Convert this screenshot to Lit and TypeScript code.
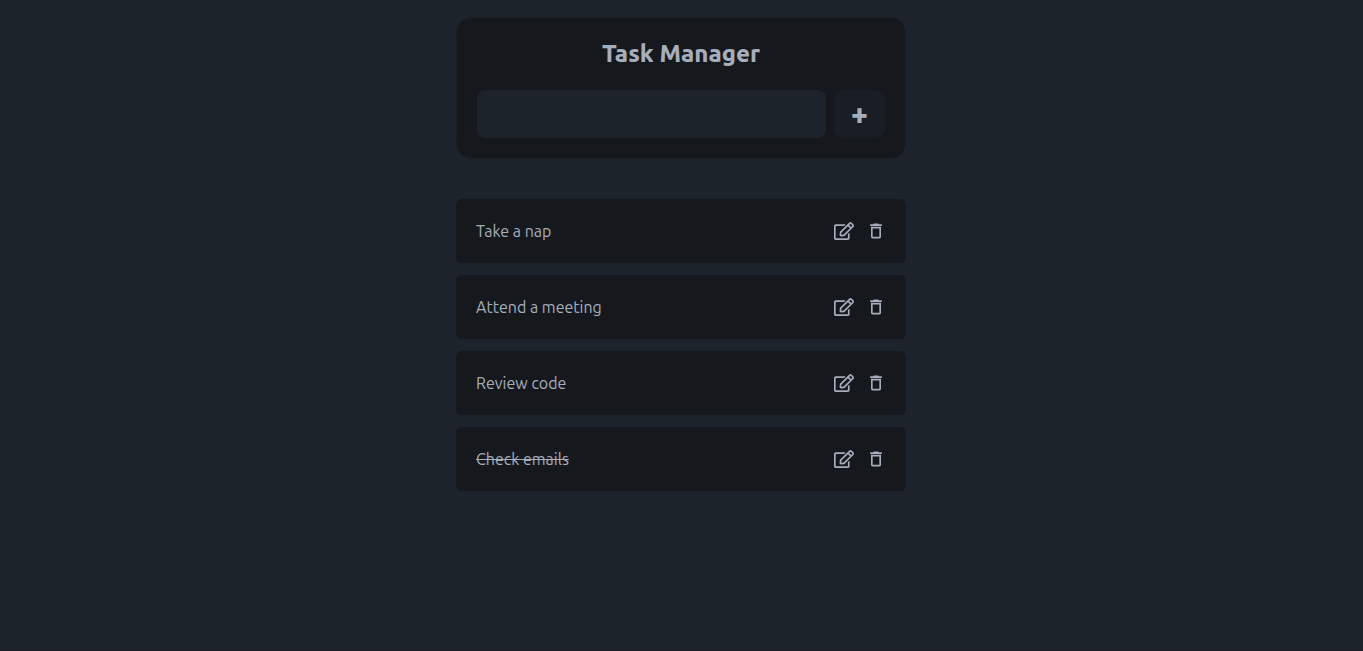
import { LitElement, html, css } from "lit";
import { customElement, property, state } from "lit/decorators.js";
import { classMap } from "lit/directives/class-map.js";

interface Task {
  id: number;
  title: string;
  done: boolean;
}

@customElement("task-item")
class TaskItem extends LitElement {
  @property({ attribute: false }) task!: Task;

  static styles = css`
    :host {
      display: flex;
      align-items: center;
      gap: 12px;
      box-sizing: border-box;
      min-height: 64px;
      padding: 12px 20px;
      border-radius: 6px;
      background: #15191e;
    }
    .title {
      flex: 1;
      min-width: 0;
      cursor: pointer;
      overflow-wrap: anywhere;
    }
    .done {
      text-decoration: line-through;
    }
    button {
      display: block;
      padding: 0;
      border: 0;
      background: none;
      color: inherit;
      cursor: pointer;
    }
    svg {
      display: block;
      width: 20px;
      height: 20px;
      fill: currentColor;
    }
  `;

  private send(name: string) {
    this.dispatchEvent(new CustomEvent(name, { detail: this.task.id }));
  }

  render() {
    return html`
      <span
        class=${classMap({ title: true, done: this.task.done })}
        @click=${() => this.send("toggle")}
        >${this.task.title}</span
      >
      <button type="button" aria-label="Edit task" @click=${() => this.send("edit")}>
        <svg viewBox="0 0 576 512" aria-hidden="true">
          <path
            d="M402.3 344.9l32-32c5-5 13.7-1.5 13.7 5.7V464c0 26.5-21.5 48-48 48H48c-26.5 0-48-21.5-48-48V112c0-26.5 21.5-48 48-48h273.5c7.1 0 10.7 8.6 5.7 13.7l-32 32c-1.5 1.5-3.5 2.3-5.7 2.3H48v352h352V350.5c0-2.1.8-4.1 2.3-5.6zm156.6-201.8L296.3 405.7l-90.4 10c-26.2 2.9-48.5-19.2-45.6-45.6l10-90.4L432.9 17.1c22.9-22.9 59.9-22.9 82.7 0l43.2 43.2c22.9 22.9 22.9 60 .1 82.8zM460.1 174L402 115.9 216.2 301.8l-7.3 65.3 65.3-7.3L460.1 174zm64.8-79.7l-43.2-43.2c-4.1-4.1-10.8-4.1-14.8 0L436 82l58.1 58.1 30.9-30.9c4-4.2 4-10.8-.1-14.9z"
          />
        </svg>
      </button>
      <button type="button" aria-label="Delete task" @click=${() => this.send("remove")}>
        <svg viewBox="0 0 24 24" aria-hidden="true">
          <path
            d="M6 19c0 1.1.9 2 2 2h8c1.1 0 2-.9 2-2V7H6v12zM8 9h8v10H8V9zm7.5-5l-1-1h-5l-1 1H5v2h14V4z"
          />
        </svg>
      </button>
    `;
  }
}

@customElement("app-root")
class AppRoot extends LitElement {
  @state() private tasks: Task[] = [
    { id: 1, title: "Take a nap", done: false },
    { id: 2, title: "Attend a meeting", done: false },
    { id: 3, title: "Review code", done: false },
    { id: 4, title: "Check emails", done: true },
  ];
  @state() private draft = "";

  static styles = css`
    :host {
      display: block;
      box-sizing: border-box;
      min-height: 100vh;
      padding: 17px 17px 40px 16px;
      border-bottom: 1px solid #191e24;
      background: #1d232a;
      color: #a6adbb;
      font-family: Ubuntu, "Noto Sans", sans-serif;
      font-size: 16px;
      line-height: 24px;
    }
    main {
      max-width: 450px;
      margin: 0 auto;
    }
    .card {
      padding: 20px;
      border: 1px solid #191e24;
      border-radius: 16px;
      background: #15191e;
    }
    h1 {
      margin: 0 0 20px;
      font-size: 24px;
      line-height: 32px;
      font-weight: 800;
      text-align: center;
    }
    form {
      display: flex;
      gap: 8px;
    }
    input {
      flex: 1;
      min-width: 0;
      height: 48px;
      box-sizing: border-box;
      padding: 0 16px;
      border: 0;
      border-radius: 8px;
      background: #1d232a;
      color: inherit;
      font: inherit;
    }
    .add {
      height: 48px;
      padding: 0 16px;
      border: 1px solid #191e24;
      border-radius: 8px;
      background: #191e24;
      color: inherit;
      font-family: inherit;
      font-size: 30px;
      line-height: 30px;
      font-weight: 800;
      cursor: pointer;
    }
    ul {
      display: grid;
      gap: 12px;
      margin: 40px 0 0;
      padding: 0;
      list-style: none;
    }
  `;

  private add(e: Event) {
    e.preventDefault();
    const title = this.draft.trim();
    if (!title) return;
    this.tasks = [...this.tasks, { id: Date.now(), title, done: false }];
    this.draft = "";
  }

  private toggle(id: number) {
    this.tasks = this.tasks.map((t) => (t.id === id ? { ...t, done: !t.done } : t));
  }

  private remove(id: number) {
    this.tasks = this.tasks.filter((t) => t.id !== id);
  }

  private edit(task: Task) {
    this.draft = task.title;
    this.remove(task.id);
  }

  render() {
    return html`
      <main>
        <section class="card">
          <h1>Task Manager</h1>
          <form @submit=${this.add}>
            <input
              type="text"
              aria-label="New task"
              .value=${this.draft}
              @input=${(e: Event) => (this.draft = (e.target as HTMLInputElement).value)}
            />
            <button class="add" type="submit" aria-label="Add task">+</button>
          </form>
        </section>
        <ul>
          ${this.tasks.map(
            (t) => html`<li>
              <task-item
                .task=${t}
                @toggle=${() => this.toggle(t.id)}
                @edit=${() => this.edit(t)}
                @remove=${() => this.remove(t.id)}
              ></task-item>
            </li>`
          )}
        </ul>
      </main>
    `;
  }
}
